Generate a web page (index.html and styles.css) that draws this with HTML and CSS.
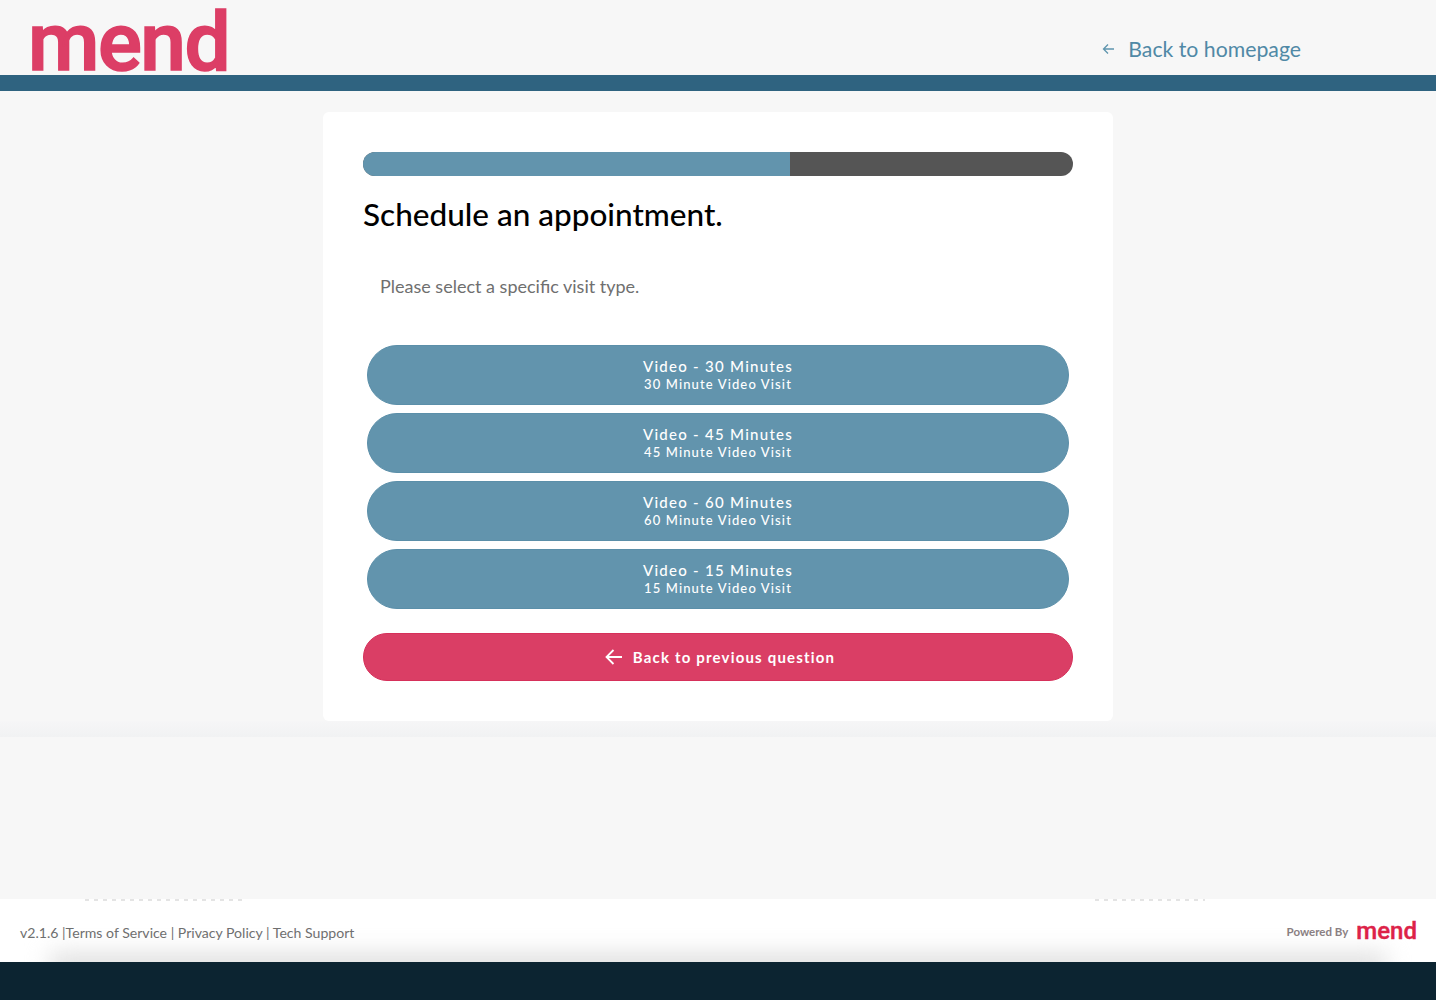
FILE: index.html
```html
<html lang="en">
<head>
    <meta charset="UTF-8">
    <title>Schedule an appointment</title>
    <link rel="stylesheet" href="styles.css">
</head>
<body>
    <header class="topbar">
        <div class="logo">mend</div>
        <a class="home-link" href="#">
            <svg class="home-arrow" width="13" height="12" viewBox="0 0 13 12"><path d="M12 6H1.5M6 1.5L1.5 6L6 10.5" fill="none" stroke="#5f95ae" stroke-width="1.3"/></svg>
            Back to homepage
        </a>
    </header>
    <div class="stripe"></div>
    <main class="page">
        <div class="card">
            <div class="progress"><div class="progress-fill"></div></div>
            <h1>Schedule an appointment.</h1>
            <p class="question">Please select a specific visit type.</p>
            <div class="options">
                <button class="option"><span class="option-title">Video - 30 Minutes</span><span class="option-sub">30 Minute Video Visit</span></button>
                <button class="option"><span class="option-title">Video - 45 Minutes</span><span class="option-sub">45 Minute Video Visit</span></button>
                <button class="option"><span class="option-title">Video - 60 Minutes</span><span class="option-sub">60 Minute Video Visit</span></button>
                <button class="option"><span class="option-title">Video - 15 Minutes</span><span class="option-sub">15 Minute Video Visit</span></button>
            </div>
            <button class="back">
                <svg width="17" height="16" viewBox="0 0 17 16"><path d="M17 8H1.5M8.5 1L1.5 8L8.5 15" fill="none" stroke="#fff" stroke-width="1.8"/></svg>
                Back to previous question
            </button>
        </div>
    </main>
    <div class="under-card"></div>
    <footer class="footer">
        <div class="footer-links">v2.1.6 |Terms of Service | Privacy Policy | Tech Support</div>
        <div class="powered"><span class="powered-text">Powered By</span><span class="powered-logo">mend</span></div>
    </footer>
    <div class="bottom"></div>
</body>
</html>
```

FILE: styles.css
```css
body { margin: 0; background: #f7f7f7; font-family: Lato, "Open Sans", sans-serif; height: 1000px; overflow: hidden; display: flex; flex-direction: column; }
.topbar { height: 75px; flex: none; display: flex; justify-content: space-between; padding: 0 135px 0 28px; box-sizing: border-box; }
.logo { font-family: Roboto, sans-serif; font-weight: 500; font-size: 82px; line-height: 66px; color: #dc3e66; -webkit-text-stroke: 1.6px #dc3e66; letter-spacing: -1.5px; margin-top: 9px; }
.home-link { color: #5089a6; font-size: 21.25px; text-decoration: none; display: flex; align-items: center; gap: 13px; height: 24px; margin-top: 37px; }
.stripe { height: 16px; flex: none; background: #2f6380; }
.page { height: 646px; flex: none; padding-top: 21px; box-sizing: border-box; display: flex; justify-content: center; background: linear-gradient(#f7f7f7 630px, #f6f6f7 630px, #f1f2f3 646px); }
.card { width: 790px; height: 609px; background: #fff; border-radius: 6px; padding: 40px; box-sizing: border-box; }
.progress { height: 24px; background: #555; border-radius: 12px; overflow: hidden; }
.progress-fill { width: 60.15%; height: 100%; background: #6294ad; }
h1 { margin: 20px 0 0; font-size: 31.5px; line-height: 36px; font-weight: 500; color: #000; }
.question { margin: 42px 0 0 17px; font-size: 18px; line-height: 24px; color: #6f6f6f; }
.options { margin: 47px 4px 0 4px; display: flex; flex-direction: column; gap: 8px; }
.option { height: 60px; border: 1px solid #5b8fa9; border-radius: 30px; background: #6294ad; color: #fff; font-family: inherit; display: flex; flex-direction: column; align-items: center; justify-content: center; padding: 1px 0 0; }
.option-title { font-size: 15px; line-height: 18px; font-weight: 500; letter-spacing: 1.27px; }
.option-sub { font-size: 13px; line-height: 19px; font-weight: 500; letter-spacing: 1.12px; }
.back { margin-top: 24px; width: 100%; height: 48px; border: 1px solid #d6305a; border-radius: 24px; background: #da3e65; color: #fff; font-family: inherit; font-size: 15px; font-weight: 700; letter-spacing: 1.18px; display: flex; align-items: center; justify-content: center; gap: 11px; padding: 0 0 0 4px; }
.under-card { height: 162px; flex: none; background: #f7f7f7; }
.footer { height: 63px; flex: none; background: repeating-linear-gradient(90deg, #e4e4e4 0 4px, #fff 4px 9px) 85px 0 / 160px 2px no-repeat, repeating-linear-gradient(90deg, #e4e4e4 0 4px, #fff 4px 9px) 1095px 0 / 110px 2px no-repeat, #fff; display: flex; justify-content: space-between; align-items: center; padding: 3px 19px 0 20px; box-sizing: border-box; position: relative; overflow: hidden; }
.footer::after { content: ""; position: absolute; left: 50px; right: 50px; bottom: -16px; height: 24px; background: #dcdcdc; filter: blur(12px); }
.footer-links { font-size: 14.1px; color: #6f6f6f; position: relative; z-index: 1; }
.powered { display: flex; align-items: center; gap: 8px; position: relative; z-index: 1; margin-top: -2px; }
.powered-text { font-size: 11.5px; font-weight: 700; color: #8a7f82; }
.powered-logo { font-family: Roboto, sans-serif; font-weight: 500; font-size: 24px; line-height: 24px; color: #dd2248; -webkit-text-stroke: 0.4px #dd2248; }
.bottom { height: 38px; flex: none; background: #0c2431; }
```
